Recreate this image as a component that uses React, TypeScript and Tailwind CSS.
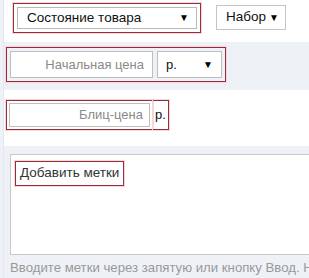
import React from "react";

const Arrow = () => <span className="text-[10px] leading-none text-black">▼</span>;

export default function App() {
  return (
    <div
      className="relative h-[278px] w-[309px] overflow-hidden bg-[#eef2f7] text-[13px]"
      style={{ fontFamily: '"Liberation Sans", Arial, sans-serif' }}
    >
      <div className="ml-[3px] border-l border-[#e3e7ee]">
        {/* row 1 */}
        <div className="flex h-[42px] items-start gap-[15px] bg-white pl-[9px] pt-[3px]">
          <div className="border border-[#9b2a3a] p-[3px] shadow-[0_0_0_1px_#f3d7dc]">
            <div className="flex h-[22px] w-[180px] items-center justify-between border border-[#b8b8b8] bg-white pl-[9px] pr-[7px] text-[13.5px] text-[#111]">
              <span>Состояние товара</span>
              <Arrow />
            </div>
          </div>
          <div className="mt-[2px] flex h-[25px] w-[70px] items-center justify-between border border-[#c4c4c4] bg-white pl-[9px] pr-[6px] text-[13.5px] text-[#111]">
            <span>Набор</span>
            <Arrow />
          </div>
        </div>

        {/* row 2 */}
        <div className="flex h-[48px] items-start pl-[2px] pt-[5px]">
          <div className="flex gap-[4px] border border-[#9b2a3a] p-[3px] shadow-[0_0_0_1px_#f3d7dc]">
            <div className="flex h-[27px] w-[143px] items-center justify-end border border-[#bfbfbf] bg-white pr-[8px] text-[#8a8a8a]">
              Начальная цена
            </div>
            <div className="flex h-[27px] w-[65px] items-center justify-between border border-[#bfbfbf] bg-white pl-[8px] pr-[8px] text-[#111]">
              <span>р.</span>
              <Arrow />
            </div>
          </div>
        </div>

        {/* row 3 */}
        <div className="flex h-[56px] items-start bg-white pl-[2px] pt-[10px]">
          <div className="border border-[#9b2a3a] p-[2px] shadow-[0_0_0_1px_#f3d7dc]">
            <div className="flex h-[24px] w-[141px] items-center justify-end border border-[#bfbfbf] bg-white pr-[6px] text-[#8a8a8a]">
              Блиц-цена
            </div>
          </div>
          <div className="flex h-[30px] items-center border border-l-0 border-[#9b2a3a] px-[2px] text-[#111] shadow-[0_0_0_1px_#f3d7dc]">
            р.
          </div>
        </div>

        {/* tags */}
        <div className="h-[8px] bg-[#eef2f7]" />
        <div className="ml-[6px] h-[101px] border-b border-l border-t border-[#c8c8c8] bg-white pl-[4px] pt-[6px]">
          <div className="inline-flex h-[25px] items-center border border-[#9b2a3a] px-[4px] text-[13.5px] text-[#333] shadow-[0_0_0_1px_#f3d7dc]">
            Добавить метки
          </div>
        </div>
        <div className="whitespace-nowrap pl-[6px] pt-[3px] text-[13.2px] text-[#999]">
          Вводите метки через запятую или кнопку Ввод. Новая
        </div>
      </div>
    </div>
  );
}
